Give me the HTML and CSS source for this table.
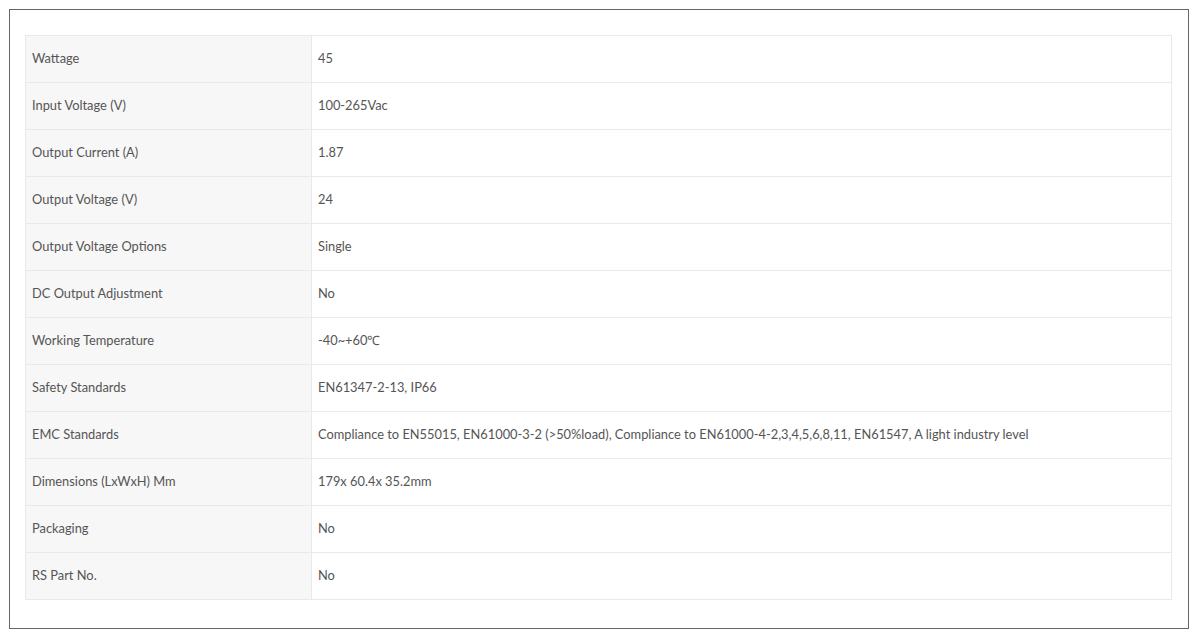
FILE: index.html
```html
<!DOCTYPE html>
<html>
<head>
<meta charset="utf-8">
<link rel="stylesheet" href="styles.css">
</head>
<body>
<div class="panel">
  <table class="specs">
    <tr><th>Wattage</th><td>45</td></tr>
    <tr><th>Input Voltage (V)</th><td>100-265Vac</td></tr>
    <tr><th>Output Current (A)</th><td>1.87</td></tr>
    <tr><th>Output Voltage (V)</th><td>24</td></tr>
    <tr><th>Output Voltage Options</th><td>Single</td></tr>
    <tr><th>DC Output Adjustment</th><td>No</td></tr>
    <tr><th>Working Temperature</th><td>-40~+60℃</td></tr>
    <tr><th>Safety Standards</th><td>EN61347-2-13, IP66</td></tr>
    <tr><th>EMC Standards</th><td>Compliance to EN55015, EN61000-3-2 (&gt;50%load), Compliance to EN61000-4-2,3,4,5,6,8,11, EN61547, A light industry level</td></tr>
    <tr><th>Dimensions (LxWxH) Mm</th><td>179x 60.4x 35.2mm</td></tr>
    <tr><th>Packaging</th><td>No</td></tr>
    <tr><th>RS Part No.</th><td>No</td></tr>
  </table>
</div>
</body>
</html>
```
FILE: styles.css
```css
html, body {
  margin: 0;
  padding: 0;
  background: #fff;
}
body {
  padding: 9px;
  font-family: Lato, "Liberation Sans", sans-serif;
  font-size: 12.85px;
  color: #555;
}
.panel {
  border: 1px solid #666;
  padding: 25px 16px 0 15px;
  box-sizing: content-box;
  width: 1147px;
  height: 593px;
}
.specs {
  width: 1147px;
  border-collapse: collapse;
  table-layout: fixed;
}
.specs th, .specs td {
  height: 47px;
  padding: 0 6px 2px;
  border: 1px solid #e9e9e9;
  text-align: left;
  font-weight: normal;
  vertical-align: middle;
  box-sizing: border-box;
}
.specs th {
  width: 286px;
  background: #f7f7f7;
}
.specs td {
  background: #fff;
}
```
